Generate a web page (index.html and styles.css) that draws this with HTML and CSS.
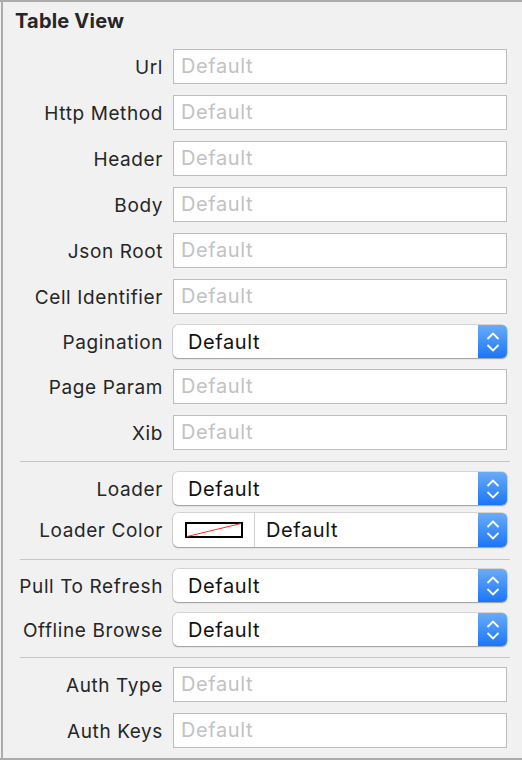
FILE: index.html
```html
<!DOCTYPE html>
<html>
<head>
<meta charset="utf-8">
<link rel="stylesheet" href="styles.css">
</head>
<body>
<div class="frame">
<div class="panel">
  <div class="title">Table View</div>
  <div class="rows">
    <div class="row"><span class="label">Url</span><div class="field">Default</div></div>
    <div class="row"><span class="label">Http Method</span><div class="field">Default</div></div>
    <div class="row"><span class="label">Header</span><div class="field">Default</div></div>
    <div class="row"><span class="label">Body</span><div class="field">Default</div></div>
    <div class="row"><span class="label">Json Root</span><div class="field">Default</div></div>
    <div class="row"><span class="label">Cell Identifier</span><div class="field">Default</div></div>
    <div class="row pop-row"><span class="label">Pagination</span>
      <div class="popup"><span class="popup-text">Default</span>
        <span class="stepper"><svg width="14" height="22" viewBox="0 0 14 22"><path d="M1.5 8 L7 2.5 L12.5 8 M1.5 14 L7 19.5 L12.5 14" fill="none" stroke="#fff" stroke-width="1.8"/></svg></span>
      </div>
    </div>
    <div class="row"><span class="label">Page Param</span><div class="field">Default</div></div>
    <div class="row"><span class="label">Xib</span><div class="field">Default</div></div>
  </div>
  <hr class="sep sep1">
  <div class="rows tight">
    <div class="row pop-row"><span class="label">Loader</span>
      <div class="popup"><span class="popup-text">Default</span>
        <span class="stepper"><svg width="14" height="22" viewBox="0 0 14 22"><path d="M1.5 8 L7 2.5 L12.5 8 M1.5 14 L7 19.5 L12.5 14" fill="none" stroke="#fff" stroke-width="1.8"/></svg></span>
      </div>
    </div>
    <div class="row color-row"><span class="label">Loader Color</span>
      <div class="popup">
        <span class="well"><svg width="58" height="16" viewBox="0 0 58 16"><rect x="1" y="1" width="56" height="14" fill="#fff" stroke="#000" stroke-width="2"/><line x1="2" y1="14.5" x2="56" y2="1.5" stroke="#ff2a2a" stroke-width="1"/></svg></span>
        <span class="popup-text well-text">Default</span>
        <span class="stepper"><svg width="14" height="22" viewBox="0 0 14 22"><path d="M1.5 8 L7 2.5 L12.5 8 M1.5 14 L7 19.5 L12.5 14" fill="none" stroke="#fff" stroke-width="1.8"/></svg></span>
      </div>
    </div>
  </div>
  <hr class="sep sep2">
  <div class="rows">
    <div class="row pop-row"><span class="label">Pull To Refresh</span>
      <div class="popup"><span class="popup-text">Default</span>
        <span class="stepper"><svg width="14" height="22" viewBox="0 0 14 22"><path d="M1.5 8 L7 2.5 L12.5 8 M1.5 14 L7 19.5 L12.5 14" fill="none" stroke="#fff" stroke-width="1.8"/></svg></span>
      </div>
    </div>
    <div class="row pop-row"><span class="label">Offline Browse</span>
      <div class="popup"><span class="popup-text">Default</span>
        <span class="stepper"><svg width="14" height="22" viewBox="0 0 14 22"><path d="M1.5 8 L7 2.5 L12.5 8 M1.5 14 L7 19.5 L12.5 14" fill="none" stroke="#fff" stroke-width="1.8"/></svg></span>
      </div>
    </div>
  </div>
  <hr class="sep sep3">
  <div class="rows">
    <div class="row"><span class="label">Auth Type</span><div class="field">Default</div></div>
    <div class="row"><span class="label">Auth Keys</span><div class="field">Default</div></div>
  </div>
</div>
</div>
</body>
</html>
```
FILE: styles.css
```css
html, body {
  margin: 0;
  padding: 0;
  background: #f1f1f1;
}
body {
  font-family: "Inter", "Roboto", "Liberation Sans", sans-serif;
  color: #262626;
}
.frame {
  width: 522px;
  height: 756px;
  border-top: 2px solid #acacac;
  border-bottom: 2px solid #acacac;
  padding-left: 1px;
  box-sizing: content-box;
  overflow: hidden;
}
.panel {
  height: 756px;
  border-left: 2px solid #acacac;
  background: #f1f1f1;
}
.title {
  font-weight: 700;
  font-size: 20px;
  letter-spacing: 0.2px;
  padding: 7px 0 0 12px;
  height: 40px;
  color: #262626;
}
.rows {
  display: flex;
  flex-direction: column;
  gap: 11px;
}
.rows.tight { gap: 8px; }
.row {
  display: flex;
  align-items: center;
  height: 35px;
}
.label {
  width: 160px;
  text-align: right;
  padding-right: 10px;
  font-size: 19px;
  letter-spacing: 0.6px;
  flex: none;
  padding-top: 1px;
}
.field {
  width: 334px;
  height: 35px;
  box-sizing: border-box;
  border: 1px solid #bdbdbd;
  background: #fff;
  font-size: 20px;
  letter-spacing: 0.6px;
  color: #c2c2c2;
  padding-left: 7px;
  line-height: 33px;
}
.pop-row { height: 33px; }
.color-row { height: 34px; }
.popup {
  width: 334px;
  height: 100%;
  box-sizing: border-box;
  background: #fff;
  border-radius: 5px;
  box-shadow: 0 0 0 0.5px rgba(0,0,0,0.22), 0 1px 1.5px rgba(0,0,0,0.28);
  display: flex;
  align-items: center;
  overflow: hidden;
}
.popup-text {
  flex: 1;
  font-size: 20px;
  letter-spacing: 0.6px;
  color: #111;
  padding-left: 15px;
}
.stepper {
  width: 29px;
  height: 100%;
  background: linear-gradient(#6aabf9, #1a76f7);
  display: flex;
  align-items: center;
  justify-content: center;
}
.well {
  width: 81px;
  height: 100%;
  border-right: 1px solid #cfcfcf;
  display: flex;
  align-items: center;
  justify-content: center;
  flex: none;
}
.well-text { padding-left: 11px; }
.sep {
  border: 0;
  height: 1px;
  background: #c6c6c6;
  margin: 0 13px 0 17px;
}
.sep1 { margin-top: 11px; margin-bottom: 10px; }
.sep2 { margin-top: 12px; margin-bottom: 9px; }
.sep3 { margin-top: 11px; margin-bottom: 9px; }
```
